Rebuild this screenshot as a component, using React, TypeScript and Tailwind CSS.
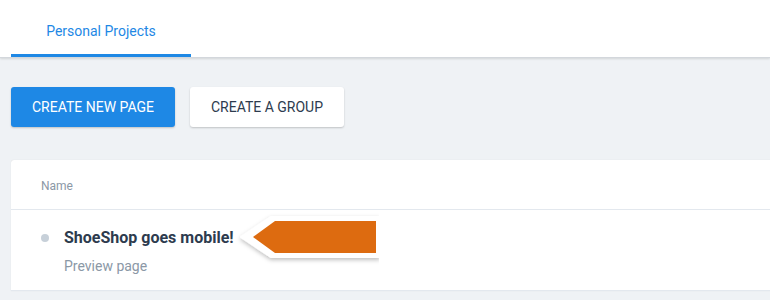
import React from "react";

export default function App() {
  return (
    <div className="w-[770px] h-[300px] overflow-hidden bg-[#eff2f5]" style={{ fontFamily: "Roboto, 'Liberation Sans', sans-serif" }}>
      <div className="h-[58px] bg-white border-b border-[#d3d7dc] shadow-[0_1px_2px_rgba(0,0,0,0.12)] flex items-end pl-[11px]">
        <div className="w-[180px] h-[58px] flex items-center justify-center border-b-[3px] border-[#1e88e5] pt-[9px] text-[14px] text-[#1e88e5]">
          Personal Projects
        </div>
      </div>
      <div className="pl-[11px] pt-[29px]">
        <div className="flex gap-[15px]">
          <button className="h-[40px] w-[164px] rounded-[3px] bg-[#1e88e5] text-white text-[14px] uppercase shadow-[0_1px_2px_rgba(0,0,0,0.2)]">
            Create new page
          </button>
          <button className="h-[40px] w-[154px] rounded-[3px] bg-white text-[#2d3b4e] text-[14px] uppercase shadow-[0_1px_2px_rgba(0,0,0,0.2)]">
            Create a group
          </button>
        </div>
        <div className="mt-[33px] bg-white rounded-tl-[3px] shadow-[0_0_1px_rgba(0,0,0,0.15)]">
          <div className="h-[50px] flex items-center pl-[30px] pt-[2px] border-b border-[#e3e8ee] text-[12px] text-[#8b98a6]">
            Name
          </div>
          <div className="relative h-[81px] border-b border-[#e3e8ee] flex">
            <div className="w-[53px] flex justify-end pr-[15px] pt-[24px]">
              <div className="w-[8px] h-[8px] rounded-full bg-[#c7d0d9]" />
            </div>
            <div className="pt-[16px]">
              <div className="text-[16px] font-bold text-[#2d3b4e] leading-[24px]">ShoeShop goes mobile!</div>
              <div className="text-[14px] text-[#8b98a6] leading-[20px] mt-[6px]">Preview page</div>
            </div>
            <svg className="absolute left-[218px] top-[0px]" width="150" height="60" viewBox="0 0 150 60">
              <defs>
                <filter id="sh" x="-20%" y="-30%" width="140%" height="170%">
                  <feDropShadow dx="0" dy="2" stdDeviation="2" floodColor="#000" floodOpacity="0.25" />
                </filter>
              </defs>
              <polygon
                points="42,7 150,7 150,47 42,47 12,27"
                fill="#ffffff"
                stroke="#ffffff"
                strokeWidth="2"
                strokeLinejoin="round"
                filter="url(#sh)"
              />
              <polygon points="46,11 147,11 147,43 46,43 24,27" fill="#dd6b10" />
            </svg>
          </div>
        </div>
      </div>
    </div>
  );
}
